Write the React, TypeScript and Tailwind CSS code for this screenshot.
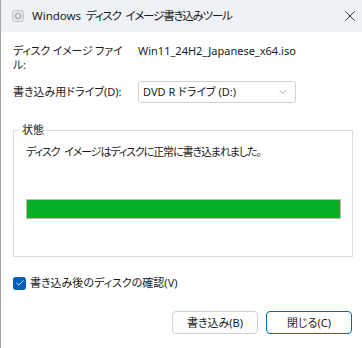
import { Check, ChevronDown } from "lucide-react";

const FONT = "font-['Noto_Sans','Noto_Sans_CJK_JP',sans-serif] [font-feature-settings:'palt']";

function DiscIcon() {
  return (
    <svg width="12" height="12" viewBox="0 0 12 12">
      <rect x="0.5" y="0.5" width="11" height="11" rx="2" fill="#e6e6e6" stroke="#c8c8c8" />
      <circle cx="6" cy="6" r="3.6" fill="#b9c0c4" />
      <circle cx="6" cy="6" r="1.4" fill="#f4f4f4" />
    </svg>
  );
}

export default function App() {
  return (
    <div className={`${FONT} w-[362px] h-[348px] bg-white border-l border-[#a3a3a3] flex flex-col text-[11px] leading-[14px] text-[#1b1b1b] overflow-hidden`}>
      {/* title bar */}
      <div className="h-[32px] bg-[#eef2f7] flex items-center pl-[11px] pr-[6px] shrink-0">
        <DiscIcon />
        <span className="ml-[8px] text-[11.5px] tracking-[-1.2px] [word-spacing:3px]">
          <span className="tracking-normal">Windows</span> ディスク イメージ書き込みツール
        </span>
        <svg className="ml-auto" width="12" height="12" viewBox="0 0 12 12">
          <path d="M1.5 1.5L10.5 10.5M10.5 1.5L1.5 10.5" stroke="#262626" strokeWidth="0.9" />
        </svg>
      </div>

      <div className="pl-[12px] pr-[9px] flex flex-col">
        <div className="flex mt-[12px]">
          <div className="w-[125px] shrink-0 tracking-[-0.2px]">ディスク イメージ ファイ<br />ル:</div>
          <div>Win11_24H2_Japanese_x64.iso</div>
        </div>

        <div className="flex items-center mt-[9px]">
          <div className="w-[125px] shrink-0">書き込み用ドライブ(D):</div>
          <div className="w-[158px] h-[22px] border border-[#d1d1d1] rounded-[3px] flex items-center pl-[4px] pr-[6px]">
            <span>DVD R ドライブ (D:)</span>
            <ChevronDown className="ml-auto text-[#666]" size={12} strokeWidth={1.2} />
          </div>
        </div>

        <fieldset className="mt-[20px] border border-[#dcdcdc] pl-[12px] pr-[11px] pb-[37px] pt-0 min-w-0">
          <legend className="-ml-[6px] px-[2px]">状態</legend>
          <div className="mt-[8px] tracking-[-1.1px] [word-spacing:3px]">ディスク イメージはディスクに正常に書き込まれました。</div>
          <div className="mt-[40px] h-[20px] border border-[#bcbcbc] bg-[#06b025]" />
        </fieldset>

        <label className="flex items-center mt-[19px]">
          <span className="w-[13px] h-[13px] rounded-[3px] bg-[#005fb8] flex items-center justify-center">
            <Check className="text-white" size={10} strokeWidth={2} />
          </span>
          <span className="ml-[4px]">書き込み後のディスクの確認(V)</span>
        </label>

        <div className="flex justify-end gap-[8px] mt-[21px] pr-[1px]">
          <button className="w-[86px] h-[23px] rounded-[4px] border border-[#d0d0d0] bg-[#fdfdfd] text-[11px]">書き込み(B)</button>
          <button className="w-[86px] h-[23px] rounded-[4px] border border-[#0067c0] bg-white text-[11px]">閉じる(C)</button>
        </div>
      </div>
    </div>
  );
}
